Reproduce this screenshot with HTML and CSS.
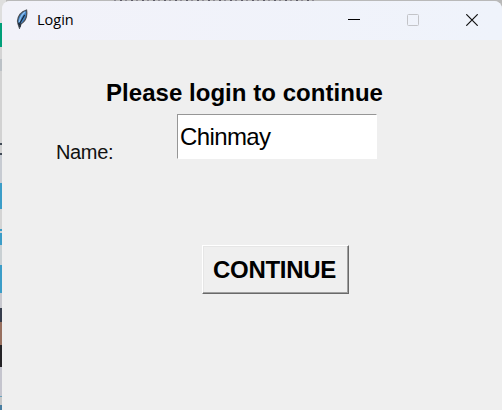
FILE: index.html
```html
<!DOCTYPE html>
<html lang="en">
<head>
<meta charset="utf-8">
<title>Login</title>
<link rel="stylesheet" href="styles.css">
</head>
<body>
<div class="desktop">
  <div class="backdrop"></div>
  <div class="fringe"></div>
  <main class="window">
    <header class="titlebar">
      <svg class="feather" width="12" height="20" viewBox="0 0 12 20">
        <path d="M10.500 1C6 2.500 2 6.500 1.500 12l.8 3.500L3.500 19l1.500-4C9.500 12 11.500 7 10.500 1z" fill="#4182c4" stroke="#4a5058" stroke-width="1.300"/>
        <path d="M9 3C6 5.500 4 9 3.300 13" fill="none" stroke="#8fc0ee" stroke-width="1.300"/>
        <path d="M8.600 6L4 14v4M2 14.500l1.500 1" fill="none" stroke="#17202c" stroke-width="1.100"/>
      </svg>
      <span class="title">Login</span>
      <div class="controls">
        <svg width="12" height="12" viewBox="0 0 12 12"><path d="M0 5.500h12" stroke="#000"/></svg>
        <svg width="12" height="12" viewBox="0 0 12 12"><rect x=".5" y=".5" width="11" height="11" rx="1" fill="none" stroke="#c3c4c8"/></svg>
        <svg width="12" height="12" viewBox="0 0 12 12"><path d="M.3.300l11.400 11.400M11.700.300L.3 11.700" stroke="#111" stroke-width="1.200"/></svg>
      </div>
    </header>
    <form class="form">
      <h1 class="heading">Please login to continue</h1>
      <div class="row">
        <span class="label">Name:</span>
        <div class="entry">Chinmay</div>
      </div>
      <button class="button" type="button">CONTINUE</button>
    </form>
  </main>
</div>
</body>
</html>
```
FILE: styles.css
```css
body {
  margin: 0;
  font-family: "Liberation Sans", sans-serif;
  color: #000;
}
.desktop {
  position: relative;
  box-sizing: border-box;
  width: 502px;
  height: 410px;
  padding: 1px 0 0 2px;
  overflow: hidden;
  background: #b9b9b9;
}
.backdrop {
  position: absolute;
  left: 0;
  top: 0;
  width: 6px;
  height: 410px;
  background: linear-gradient(#dedede 0 23px, #009f79 23px 47px, #d4d4d4 47px 59px, #bbc1c6 59px 71px, #d2d2d2 71px 143px, #414b57 143px 145px, #d2d2d2 145px 153px, #414b57 153px 155px, #c7cbd2 155px 183px, #3b9dc8 183px 209px, #d4d4d4 209px 229px, #3b9dc8 229px 231px, #d4d4d4 231px 233px, #3b9dc8 233px 245px, #c9d0d3 245px 265px, #3b9dc8 265px 293px, #c8c8ce 293px 308px, #363d4c 308px 322px, #98705f 322px 345px, #242326 345px 367px, #c5c5ce 367px 396px, #69a3bd 396px 397px, #c8c8c8 397px 405px, #477da1 405px);
}
.fringe {
  position: absolute;
  left: 114px;
  top: 0;
  width: 204px;
  height: 1px;
  background: repeating-linear-gradient(90deg, #8a8790 0 2px, #b9b9b9 2px 6px, #5c5a66 6px 8px, #b9b9b9 8px 11px);
}
.window {
  position: relative;
  height: 409px;
  overflow: hidden;
  border-radius: 8px 8px 0 0;
  background: #efefef;
}
.titlebar {
  display: flex;
  align-items: center;
  box-sizing: border-box;
  height: 39px;
  padding: 0 24px 2px 14px;
  background: linear-gradient(90deg, #f2f2f9, #eff3fb);
}
.feather {
  margin-top: -1px;
}
.title {
  margin-left: 9px;
  font: 14.5px/20px "Open Sans", "Noto Sans", sans-serif;
}
.controls {
  display: flex;
  gap: 47px;
  margin-left: auto;
}
.controls svg {
  display: block;
}
.form {
  display: flex;
  flex-direction: column;
  padding: 39px 0 0 54px;
}
.heading {
  margin: 0 0 0 50px;
  font-size: 24px;
  line-height: 28px;
  letter-spacing: 0.04px;
  white-space: nowrap;
}
.row {
  display: flex;
  margin-top: 7px;
}
.label {
  width: 121px;
  padding-top: 26px;
  font-size: 20px;
  line-height: 24px;
  letter-spacing: -0.35px;
  color: #111;
}
.entry {
  box-sizing: border-box;
  width: 200px;
  height: 45px;
  padding-left: 2px;
  border: 1px solid #fff;
  border-top-color: #969696;
  border-left-color: #969696;
  background: #fff;
  font-size: 24px;
  line-height: 44px;
  letter-spacing: -0.6px;
}
.button {
  box-sizing: border-box;
  width: 147px;
  height: 49px;
  margin: 81px 0 0 146px;
  padding: 0 2px 0 0;
  border: 1px solid;
  border-color: #fff #696969 #696969 #fff;
  box-shadow: inset -1px -1px #a0a0a0, inset 1px 1px #e6e6e6;
  background: #efefef;
  color: #000;
  font: bold 24px/45px "Liberation Sans", sans-serif;
  letter-spacing: -0.3px;
}
```
